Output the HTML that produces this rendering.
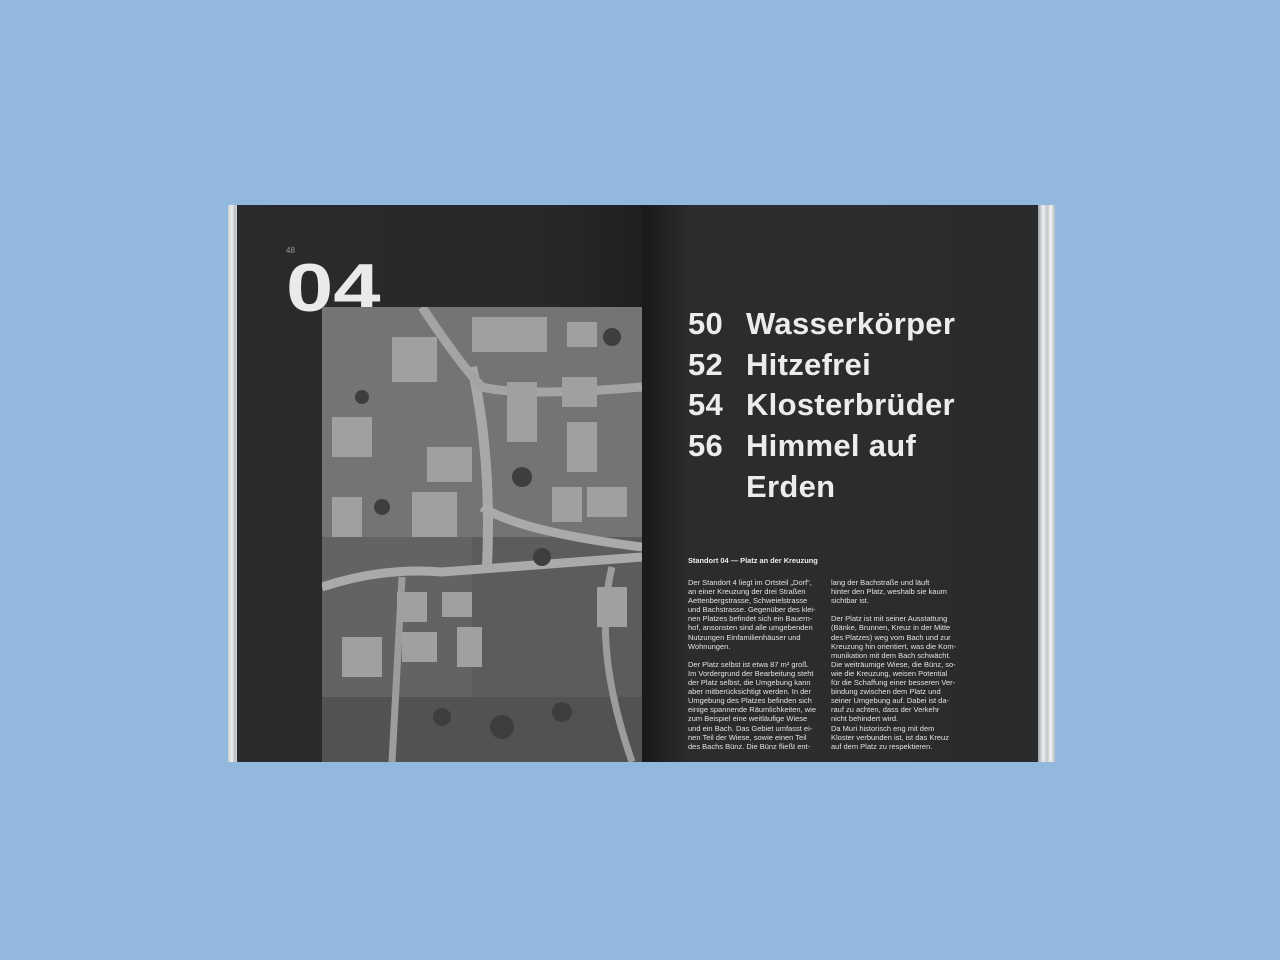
<!DOCTYPE html>
<html><head><meta charset="utf-8"><style>
body{margin:0;width:1280px;height:960px;background:#92b8de;position:relative;overflow:hidden;font-family:"Liberation Sans",sans-serif}
.edgeL{position:absolute;left:228px;top:205px;width:10px;height:557px;background:linear-gradient(90deg,#c9ccd0,#eef0f2 40%,#b8bcc0 70%,#e6e8ea)}
.edgeR{position:absolute;left:1038px;top:205px;width:17px;height:557px;background:linear-gradient(90deg,#9fa3a7,#eceef0 30%,#c4c7ca 55%,#f2f3f4 75%,#b5b9bd)}
.pL{position:absolute;left:237px;top:205px;width:405px;height:557px;background:linear-gradient(90deg,#2a2b2d,#262729 80%,#1e1f21)}
.pR{position:absolute;left:642px;top:205px;width:397px;height:557px;background:linear-gradient(90deg,#18191a,#2b2c2e 12%,#2a2b2d)}
.num{position:absolute;left:286px;top:246px;color:#9a9b9d;font-size:8px}
.big{position:absolute;left:286px;top:254px;color:#e9eaea;font-size:68px;font-weight:bold;line-height:68px;transform:scaleX(1.25);transform-origin:0 0}
.photo{position:absolute;left:322px;top:307px;width:320px;height:455px;background:#6b6b6b;overflow:hidden}
.t{position:absolute;left:688px;top:304px;color:#ececec;font-size:31px;font-weight:bold;line-height:40.7px;letter-spacing:0.3px}
.t span{display:inline-block;width:58px}
.h{position:absolute;left:688px;top:556px;color:#eee;font-size:7.4px;font-weight:bold}
.c{position:absolute;top:578px;color:#e2e2e2;font-size:7.5px;line-height:9.1px;white-space:nowrap}
</style></head><body>
<div class="edgeL"></div><div class="pL"></div><div class="pR"></div><div class="edgeR"></div>
<div class="num">48</div>
<div class="big">04</div>
<div class="photo">
<svg width="320" height="455" viewBox="0 0 320 455">
<rect width="320" height="455" fill="#747474"/>
<rect x="0" y="230" width="320" height="160" fill="#636363"/>
<rect x="150" y="230" width="170" height="170" fill="#5c5c5c"/>
<rect x="0" y="390" width="320" height="65" fill="#525252"/>
<path d="M0 280 Q60 260 120 265 L320 250" stroke="#aaa" stroke-width="9" fill="none"/>
<path d="M150 60 Q170 150 165 260" stroke="#a8a8a8" stroke-width="10" fill="none"/>
<path d="M100 0 Q140 60 160 80 Q200 90 320 80" stroke="#a4a4a4" stroke-width="9" fill="none"/>
<path d="M160 200 Q200 225 320 240" stroke="#aaa" stroke-width="9" fill="none"/>
<path d="M80 270 L70 455" stroke="#9c9c9c" stroke-width="7" fill="none"/>
<path d="M290 260 Q270 340 310 455" stroke="#9c9c9c" stroke-width="7" fill="none"/>
<g fill="#a0a0a0">
<rect x="70" y="30" width="45" height="45"/><rect x="150" y="10" width="75" height="35"/><rect x="245" y="15" width="30" height="25"/>
<rect x="185" y="75" width="30" height="60"/><rect x="240" y="70" width="35" height="30"/><rect x="245" y="115" width="30" height="50"/>
<rect x="10" y="110" width="40" height="40"/><rect x="105" y="140" width="45" height="35"/><rect x="90" y="185" width="45" height="45"/>
<rect x="230" y="180" width="30" height="35"/><rect x="265" y="180" width="40" height="30"/><rect x="10" y="190" width="30" height="40"/>
<rect x="75" y="285" width="30" height="30"/><rect x="120" y="285" width="30" height="25"/><rect x="80" y="325" width="35" height="30"/>
<rect x="135" y="320" width="25" height="40"/><rect x="20" y="330" width="40" height="40"/><rect x="275" y="280" width="30" height="40"/>
</g>
<g fill="#3e3e3e">
<circle cx="200" cy="170" r="10"/><circle cx="60" cy="200" r="8"/><circle cx="220" cy="250" r="9"/><circle cx="40" cy="90" r="7"/>
<circle cx="180" cy="420" r="12"/><circle cx="240" cy="405" r="10"/><circle cx="120" cy="410" r="9"/><circle cx="290" cy="30" r="9"/>
</g>
</svg></div>
<div class="t"><span>50</span>Wasserkörper<br><span>52</span>Hitzefrei<br><span>54</span>Klosterbrüder<br><span>56</span>Himmel auf<br><span></span>Erden</div>
<div class="h">Standort 04 — Platz an der Kreuzung</div>
<div class="c" style="left:688px">Der Standort 4 liegt im Ortsteil „Dorf“,<br>an einer Kreuzung der drei Straßen<br>Aettenbergstrasse, Schweielstrasse<br>und Bachstrasse. Gegenüber des klei-<br>nen Platzes befindet sich ein Bauern-<br>hof, ansonsten sind alle umgebenden<br>Nutzungen Einfamilienhäuser und<br>Wohnungen.<br><br>Der Platz selbst ist etwa 87 m² groß.<br>Im Vordergrund der Bearbeitung steht<br>der Platz selbst, die Umgebung kann<br>aber mitberücksichtigt werden. In der<br>Umgebung des Platzes befinden sich<br>einige spannende Räumlichkeiten, wie<br>zum Beispiel eine weitläufige Wiese<br>und ein Bach. Das Gebiet umfasst  ei-<br>nen Teil der Wiese, sowie einen Teil<br>des Bachs Bünz. Die Bünz fließt ent-</div>
<div class="c" style="left:831px">lang der Bachstraße und läuft<br>hinter den Platz, weshalb sie kaum<br>sichtbar ist.<br><br>Der Platz ist mit seiner Ausstattung<br>(Bänke, Brunnen, Kreuz in der Mitte<br>des Platzes) weg vom Bach und zur<br>Kreuzung hin orientiert, was die Kom-<br>munikation mit dem Bach schwächt.<br>Die weiträumige Wiese, die Bünz, so-<br>wie die Kreuzung, weisen Potential<br>für die Schaffung einer besseren Ver-<br>bindung zwischen dem Platz und<br>seiner Umgebung auf. Dabei ist da-<br>rauf zu achten, dass der Verkehr<br>nicht behindert wird.<br>Da Muri historisch eng mit dem<br>Kloster verbunden ist, ist das Kreuz<br>auf dem Platz zu respektieren.</div>
</body></html>
